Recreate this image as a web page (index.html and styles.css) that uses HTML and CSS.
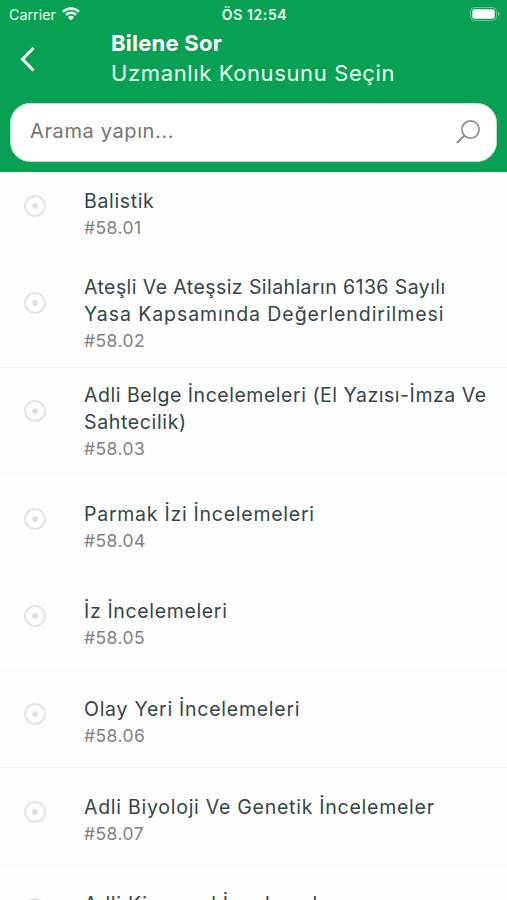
FILE: index.html
```html
<!DOCTYPE html>
<html lang="tr">
<head>
<meta charset="utf-8">
<meta name="viewport" content="width=device-width, initial-scale=1">
<title>Bilene Sor</title>
<link rel="stylesheet" href="styles.css">
</head>
<body>
<div class="app">
<header class="header">
  <div class="status">
    <div class="carrier"><span class="carrier-name">Carrier</span>
      <svg class="wifi" width="18" height="14" viewBox="0 0 18 14"><path d="M1 4.8a11.5 11.5 0 0 1 16 0M3.9 7.9a7.3 7.3 0 0 1 10.2 0" fill="none" stroke="currentColor" stroke-width="2.4"/><path d="M5.9 10.3a4.5 4.5 0 0 1 6.2 0L9 13.6z" fill="currentColor"/></svg>
    </div>
    <span class="clock">ÖS 12:54</span>
    <svg class="battery" width="30" height="14" viewBox="0 0 30 14"><rect x=".5" y=".5" width="26" height="13" rx="4" fill="none" stroke="#fff" stroke-opacity=".4"/><rect x="2.300" y="2.300" width="22.400" height="9.400" rx="2.300" fill="#fff"/><path d="M28 4.800c2 .8 2 3.600 0 4.400z" fill="#fff" fill-opacity=".5"/></svg>
  </div>
  <div class="nav">
    <svg class="back" width="16" height="26" viewBox="0 0 16 26"><path d="M13.500 2 2.500 13.300l11 11.200" fill="none" stroke="#fff" stroke-width="3"/></svg>
    <div class="heading">
      <h1 class="app-name">Bilene Sor</h1>
      <p class="page-name">Uzmanlık Konusunu Seçin</p>
    </div>
  </div>
  <div class="search">
    <span class="placeholder">Arama yapın...</span>
    <svg width="26" height="26" viewBox="0 0 26 26"><circle cx="15.500" cy="10.500" r="8.600" fill="none" stroke="#8b8b8b" stroke-width="1.600"/><path d="M9.500 16.500 1.800 24" stroke="#8b8b8b" stroke-width="1.900"/></svg>
  </div>
</header>
<main class="list">
  <div class="row first"><i class="radio"></i><div><p class="title">Balistik</p><p class="code">#58.01</p></div></div>
  <div class="row double"><i class="radio"></i><div><p class="title"><span class="snug">Ateşli Ve Ateşsiz Silahların 6136 Sayılı</span><br><span class="wide">Yasa Kapsamında Değerlendirilmesi</span></p><p class="code">#58.02</p></div></div>
  <div class="row double"><i class="radio"></i><div><p class="title"><span class="medium">Adli Belge İncelemeleri (El Yazısı-İmza Ve</span><br>Sahtecilik)</p><p class="code">#58.03</p></div></div>
  <div class="row"><i class="radio"></i><div><p class="title roomy">Parmak İzi İncelemeleri</p><p class="code">#58.04</p></div></div>
  <div class="row"><i class="radio"></i><div><p class="title">İz İncelemeleri</p><p class="code">#58.05</p></div></div>
  <div class="row"><i class="radio"></i><div><p class="title roomy">Olay Yeri İncelemeleri</p><p class="code">#58.06</p></div></div>
  <div class="row"><i class="radio"></i><div><p class="title roomy">Adli Biyoloji Ve Genetik İncelemeler</p><p class="code">#58.07</p></div></div>
  <div class="row"><i class="radio"></i><div><p class="title roomy">Adli Kimyasal İncelemeler</p></div></div>
</main>
</div>
</body>
</html>
```
FILE: styles.css
```css
* { box-sizing: border-box; }
body { margin: 0; background: #fefefe; font-family: Inter, "Liberation Sans", sans-serif; }
h1, p { margin: 0; }
svg { display: block; flex: none; }
.app { height: 900px; overflow: hidden; }
.header { height: 172px; background: #08a153; color: #fff; }
.status { height: 28px; padding: 0 7px 0 9px; display: grid; grid-template-columns: 1fr auto 1fr; align-items: center; font-size: 14.300px; color: #e9fff2; }
.carrier { display: flex; align-items: center; gap: 6px; }
.clock { font-weight: 600; font-size: 14px; letter-spacing: .6px; }
.battery { justify-self: end; margin-top: -1px; }
.nav { height: 75px; padding-left: 20px; display: flex; }
.back { margin-top: 18px; }
.heading { margin-left: 75px; white-space: nowrap; }
.app-name { font-size: 22px; line-height: 30px; font-weight: 700; letter-spacing: .25px; }
.page-name { font-size: 22px; line-height: 31px; letter-spacing: .62px; color: #e9fff2; }
.search { height: 59px; margin: 0 10px; padding: 0 15px 3px 19px; border-radius: 20px; background: #fff; display: flex; align-items: center; justify-content: space-between; border: 1px solid #b5e2ca; }
.search svg { margin-top: 2px; }
.placeholder { font-size: 20px; letter-spacing: .62px; color: #757575; }
.row { height: 97.700px; padding: 25.500px 0 0 24px; display: flex; border-bottom: 1px solid #f3f4f4; white-space: nowrap; }
.row.first { height: 88px; padding-top: 15.500px; }
.row.double { height: 107.600px; padding-top: 14px; }
.radio { flex: none; width: 22px; height: 22px; margin: 7px 38px 0 0; border: 2px solid #e3e3e3; border-radius: 50%; background: radial-gradient(circle, #dcdcdc 2.300px, transparent 3.300px); }
.double .radio { margin-top: 18px; }
.title { font-size: 19.500px; line-height: 27px; letter-spacing: .65px; color: #34454a; }
.snug { letter-spacing: .42px; }
.medium { letter-spacing: .53px; }
.roomy { letter-spacing: .74px; }
.wide { letter-spacing: .93px; }
.code { font-size: 17.500px; line-height: 26px; letter-spacing: .45px; color: #818181; }
```
